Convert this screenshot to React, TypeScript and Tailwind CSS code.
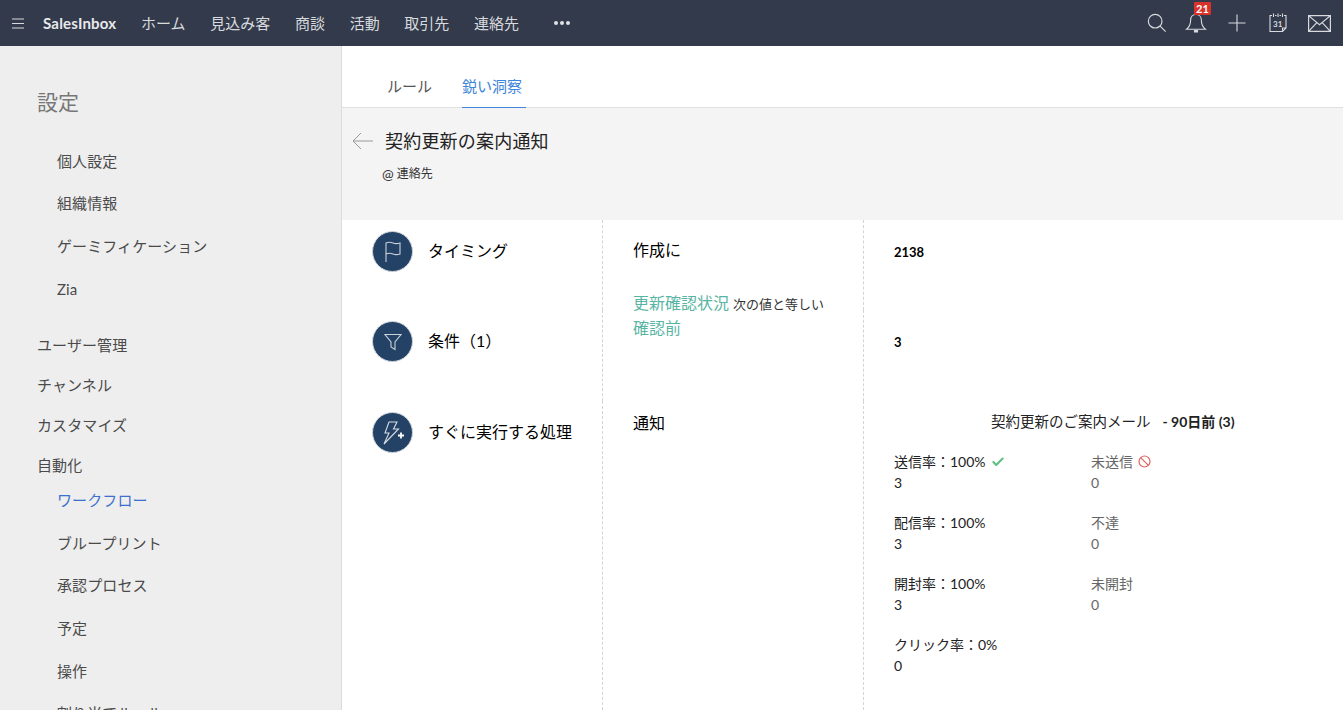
import { Check } from 'lucide-react';

const font = 'font-["Lato","Noto_Sans_CJK_JP",sans-serif]';

const navItems = ['ホーム', '見込み客', '商談', '活動', '取引先', '連絡先'];

const sideTop = ['個人設定', '組織情報', 'ゲーミフィケーション', 'Zia'];
const sideGroups = ['ユーザー管理', 'チャンネル', 'カスタマイズ', '自動化'];
const sideAuto = ['ワークフロー', 'ブループリント', '承認プロセス', '予定', '操作', '割り当てルール'];

const stats = [
  { label: '送信率：100%', value: '3', right: '未送信', rightValue: '0', mark: true },
  { label: '配信率：100%', value: '3', right: '不達', rightValue: '0' },
  { label: '開封率：100%', value: '3', right: '未開封', rightValue: '0' },
  { label: 'クリック率：0%', value: '0' },
];

function HeaderIcons() {
  return (
    <div className="ml-auto flex items-center text-[#d8dade]">
      <svg width="20" height="20" viewBox="0 0 22 22" fill="none" stroke="currentColor" strokeWidth="1.3" className="mr-[18px]">
        <circle cx="9" cy="9" r="7.5" />
        <path d="M14.5 14.5 L20.5 20.5" />
      </svg>
      <div className="relative mr-[20px] h-[22px] w-[22px]">
        <svg width="22" height="22" viewBox="0 0 22 22" fill="none" stroke="currentColor" strokeWidth="1.1">
          <path d="M11 2.5c-3.6 0-5.4 2.7-5.4 6 0 4.200-1.200 6.300-4 8.700h18.800c-2.800-2.400-4-4.500-4-8.700 0-3.300-1.800-6-5.400-6z" />
          <path d="M9.500 18.500h3v1.500h-3z" fill="currentColor" />
        </svg>
        <span className="absolute left-[9px] top-[-10px] flex h-[13px] w-[17px] items-center justify-center rounded-[1px] bg-[#d9322b] text-[11px] font-bold leading-none text-white">
          21
        </span>
      </div>
      <svg width="20" height="20" viewBox="0 0 20 20" fill="none" stroke="currentColor" strokeWidth="1.1" className="mr-[21px]">
        <path d="M10 1.500V18.500M1.500 10H18.500" />
      </svg>
      <svg width="20" height="22" viewBox="0 0 20 22" fill="none" stroke="currentColor" strokeWidth="1.1" className="mr-[20px]">
        <path d="M4 3.500H2v16h12.500l3.500-3.500V3.500h-2M7 3.500h1.500M11.500 3.500H13M5.500 1.500v3.500M10 1.500v3.500M14.500 1.500v3.500M14.500 19.500V16H18" />
        <text x="5" y="14.500" fontSize="8" fontWeight="700" fill="currentColor" stroke="none" fontFamily="Lato, sans-serif">31</text>
      </svg>
      <svg width="23" height="17" viewBox="0 0 23 17" fill="none" stroke="currentColor" strokeWidth="1.200" className="mr-[12px]">
        <path d="M.6.6h21.800v15.800H.6zM.6.6l10.900 9 10.900-9M.6 16.400l8-8.500M22.400 16.400l-8-8.500" />
      </svg>
    </div>
  );
}

function Circle({ children }: { children: React.ReactNode }) {
  return (
    <div className="flex h-[41px] w-[41px] shrink-0 items-center justify-center rounded-full border border-[#cfd5dc] bg-[#234266]">
      {children}
    </div>
  );
}

function Row({
  className,
  icon,
  title,
  middle,
  right,
}: {
  className: string;
  icon: React.ReactNode;
  title: string;
  middle: React.ReactNode;
  right: React.ReactNode;
}) {
  return (
    <div className={`grid grid-cols-[261px_261px_1fr] ${className}`}>
      <div className="border-r border-dashed border-[#d4d4d4] pl-[30px] pt-[11px]">
        <div className="flex items-center gap-[15px]">
          {icon}
          <span className="-mt-[2px] text-[16px] leading-[20px] text-black">{title}</span>
        </div>
      </div>
      <div className="border-r border-dashed border-[#d4d4d4] pl-[30px] pt-[11px]">{middle}</div>
      <div className="pl-[30px] pt-[11px]">{right}</div>
    </div>
  );
}

export default function App() {
  return (
    <div className={`flex h-[710px] w-full flex-col overflow-hidden bg-white ${font}`}>
      {/* Top bar */}
      <header className="flex h-[46px] shrink-0 items-center bg-[#333a4b] pl-[12px]">
        <svg width="12" height="11" viewBox="0 0 12 11" stroke="#d8dade" strokeWidth="1.200" className="mr-[19px]">
          <path d="M0 1h12M0 5.500h12M0 10h12" />
        </svg>
        <span className="mr-[24px] w-[74px] whitespace-nowrap text-[15px] font-bold tracking-[0.2px] text-[#e8e9ec]">SalesInbox</span>
        <nav className="flex items-center gap-[24.700px]">
          {navItems.map((item) => (
            <span key={item} className="text-[15px] text-[#d8dade]">
              {item}
            </span>
          ))}
        </nav>
        <div className="ml-[35px] flex gap-[2px]">
          <span className="h-[4px] w-[4px] rounded-full bg-[#e0e2e6]" />
          <span className="h-[4px] w-[4px] rounded-full bg-[#e0e2e6]" />
          <span className="h-[4px] w-[4px] rounded-full bg-[#e0e2e6]" />
        </div>
        <HeaderIcons />
      </header>

      <div className="flex min-h-0 flex-1">
        {/* Sidebar */}
        <aside className="w-[342px] shrink-0 border-r border-[#dcdcdc] bg-[#eeeeee] pl-[37px] pt-[41px]">
          <h1 className="text-[21px] leading-[30px] text-[#777777]">設定</h1>
          <ul className="mt-[22.500px] pl-[20px]">
            {sideTop.map((item) => (
              <li key={item} className="flex h-[42.700px] items-center text-[15px] tracking-[0.1px] text-[#4a4a4a]">
                {item}
              </li>
            ))}
          </ul>
          <ul className="mt-[14.500px]">
            {sideGroups.map((item) => (
              <li key={item} className="flex h-[40px] items-center text-[15px] tracking-[0.1px] text-[#4a4a4a]">
                {item}
              </li>
            ))}
          </ul>
          <ul className="-mt-[6px] pl-[20px]">
            {sideAuto.map((item, i) => (
              <li
                key={item}
                className={`flex h-[42.700px] items-center text-[15px] tracking-[0.1px] ${i === 0 ? 'text-[#3b70d0]' : 'text-[#4a4a4a]'}`}
              >
                {item}
              </li>
            ))}
          </ul>
        </aside>

        <main className="flex min-w-0 flex-1 flex-col">
          {/* Tabs */}
          <div className="flex h-[62px] shrink-0 items-end gap-[30px] border-b border-[#e0e0e0] pl-[45px]">
            <span className="pb-[10px] text-[15px] leading-[22px] text-[#555555]">ルール</span>
            <span className="-mb-px w-[64px] border-b border-[#3d85d8] pb-[10px] text-[15px] leading-[22px] text-[#3d85d8]">
              鋭い洞察
            </span>
          </div>

          {/* Rule title */}
          <div className="h-[112px] shrink-0 bg-[#f4f4f4] pl-[10px] pt-[20px]">
            <div className="flex items-center gap-[12px]">
              <svg width="21" height="18" viewBox="0 0 21 18" fill="none" stroke="#9a9a9a" strokeWidth="1">
                <path d="M21 9H1M9 1L1 9l8 8" />
              </svg>
              <span className="text-[18px] leading-[26px] tracking-[0.2px] text-[#222222]">契約更新の案内通知</span>
            </div>
            <div className="mt-[11px] flex items-center gap-[3px] pl-[30px] text-[12px] leading-[18px] text-[#333333]">
              <span className="text-[14px]">@</span>
              <span>連絡先</span>
            </div>
          </div>

          {/* Rule details */}
          <div className="flex min-h-0 flex-1 flex-col">
            <Row
              className="h-[90px] shrink-0"
              icon={
                <Circle>
                  <svg width="18" height="22" viewBox="0 0 18 22" fill="none" stroke="#c9d1db" strokeWidth="1.100">
                    <path d="M2 21V2c3-1.500 5-.8 7 0s4 1 7 0v11c-3 1-5 .8-7 0s-4-1.500-7 0" />
                  </svg>
                </Circle>
              }
              title="タイミング"
              middle={<div className="pt-[9px] text-[16px] leading-[20px] text-black">作成に</div>}
              right={<div className="pt-[11px] text-[13px] font-bold leading-[20px] text-black">2138</div>}
            />
            <Row
              className="h-[91px] shrink-0"
              icon={
                <Circle>
                  <svg width="18" height="18" viewBox="0 0 18 18" fill="none" stroke="#c9d1db" strokeWidth="1.100">
                    <path d="M1 1.500h16l-6 7.500v7.500l-4-2.500V9z" />
                  </svg>
                </Circle>
              }
              title="条件（1）"
              middle={
                <div className="-mt-[30px] w-[200px] text-[16px] leading-[24px] text-[#59b5a3]">
                  更新確認状況 <span className="text-[13px] text-[#333333]">次の値と等しい</span>
                  <br />
                  確認前
                </div>
              }
              right={<div className="pt-[11px] text-[13px] font-bold leading-[20px] text-black">3</div>}
            />
            <Row
              className="min-h-0 flex-1"
              icon={
                <Circle>
                  <svg width="24" height="26" viewBox="0 0 24 26" fill="none" stroke="#d6dce3" strokeWidth="1.100">
                    <path d="M8 2h8l-3.500 7h5L3 24l5-11H4z" />
                    <path d="M17 15.500h6M20 12.500v6" stroke="#ffffff" strokeWidth="1.800" />
                  </svg>
                </Circle>
              }
              title="すぐに実行する処理"
              middle={<div className="pt-[1px] text-[16px] leading-[20px] text-black">通知</div>}
              right={
                <div>
                  <div className="pl-[97px] text-[14.500px] leading-[20px] text-[#222222]">
                    契約更新のご案内メール
                    <span className="ml-[12px] text-[14px] font-bold">- 90日前 (3)</span>
                  </div>
                  <div className="mt-[19px] grid grid-cols-[197px_1fr] gap-y-[19px] text-[14px] leading-[21px]">
                    {stats.map((s) => (
                      <div key={s.label} className="contents">
                        <div className="text-[#222222]">
                          <div className="flex items-center gap-[5px]">
                            {s.label}
                            {s.mark && <Check size={14} strokeWidth={3.500} className="text-[#5cbf80]" />}
                          </div>
                          <div>{s.value}</div>
                        </div>
                        <div className="text-[#666666]">
                          {s.right && (
                            <>
                              <div className="flex items-center gap-[5px]">
                                {s.right}
                                {s.mark && (
                                  <svg width="13" height="13" viewBox="0 0 13 13" fill="none" stroke="#e0645c" strokeWidth="1.200">
                                    <circle cx="6.500" cy="6.500" r="5.500" />
                                    <path d="M2.600 2.600l7.800 7.800" />
                                  </svg>
                                )}
                              </div>
                              <div>{s.rightValue}</div>
                            </>
                          )}
                        </div>
                      </div>
                    ))}
                  </div>
                </div>
              }
            />
          </div>
        </main>
      </div>
    </div>
  );
}
